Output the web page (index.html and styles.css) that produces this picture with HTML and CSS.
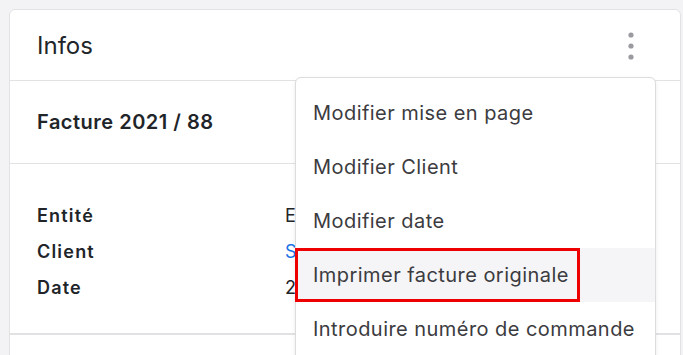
FILE: index.html
```html
<!DOCTYPE html>
<html lang="fr">
<head>
<meta charset="utf-8">
<link rel="stylesheet" href="styles.css">
</head>
<body>
<div class="page">
  <div class="card">
    <div class="card-header">
      <h2 class="title">Infos</h2>
      <button class="kebab" aria-label="Actions">
        <svg width="8" height="30" viewBox="0 0 8 30"><circle cx="4" cy="4" r="2.6"/><circle cx="4" cy="15" r="2.6"/><circle cx="4" cy="26" r="2.6"/></svg>
      </button>
    </div>
    <div class="section invoice">Facture 2021 / 88</div>
    <div class="section details">
      <div class="row"><span class="label">Entité</span><span class="value">Entreprise SA</span></div>
      <div class="row"><span class="label">Client</span><span class="value link">Société Dupont</span></div>
      <div class="row"><span class="label">Date</span><span class="value">2021-06-14</span></div>
    </div>
    <div class="section rest"></div>
  </div>
  <ul class="menu">
    <li class="item">Modifier mise en page</li>
    <li class="item">Modifier Client</li>
    <li class="item">Modifier date</li>
    <li class="item active">Imprimer facture originale</li>
    <li class="item">Introduire numéro de commande</li>
  </ul>
  <div class="highlight"></div>
</div>
</body>
</html>
```

FILE: styles.css
```css
html, body {
  margin: 0;
  padding: 0;
  background: #f3f3f5;
  font-family: Inter, "Noto Sans", sans-serif;
  color: #212529;
}
.page {
  position: relative;
  width: 683px;
  height: 355px;
  overflow: hidden;
  padding: 9px 2px 0 9px;
  box-sizing: border-box;
}
.card {
  background: #fff;
  border: 1px solid #e2e2e4;
  border-radius: 6px;
  height: 400px;
}
.card-header {
  height: 70px;
  border-bottom: 1px solid #e2e2e4;
  display: flex;
  align-items: center;
  justify-content: space-between;
  padding: 0 45px 0 27px;
}
.title {
  margin: 0;
  font-size: 24px;
  font-weight: 400;
  color: #212529;
}
.kebab {
  border: 0;
  background: none;
  padding: 0;
  display: flex;
  margin-top: 1px;
}
.kebab svg { fill: #9a9aa0; }
.section {
  border-bottom: 1px solid #e2e2e4;
  padding-left: 27px;
}
.invoice {
  height: 82px;
  display: flex;
  align-items: center;
  font-size: 20px;
  letter-spacing: 0.5px;
  font-weight: 600;
}
.details {
  height: 170px;
  box-sizing: border-box;
  padding-top: 34px;
}
.row {
  display: flex;
  height: 36px;
  font-size: 18px;
  line-height: 36px;
}
.label {
  width: 248px;
  font-weight: 600;
  letter-spacing: 1.2px;
}
.value { white-space: nowrap; }
.link { color: #1a73e8; }
.menu {
  position: absolute;
  left: 295px;
  top: 77px;
  width: 361px;
  margin: 0;
  padding: 8px 0;
  list-style: none;
  background: #fff;
  border: 1px solid #dcdcdf;
  border-radius: 6px;
  box-shadow: 0 2px 4px rgba(0,0,0,0.08);
  box-sizing: border-box;
}
.item {
  height: 54px;
  line-height: 54px;
  padding-left: 17px;
  font-size: 20px;
  letter-spacing: 0.45px;
  color: #3b3b40;
  white-space: nowrap;
}
.item.active { background: #f5f5f7; }
.highlight {
  position: absolute;
  left: 295px;
  top: 248px;
  width: 285px;
  height: 54px;
  box-sizing: border-box;
  border: 3px solid #ee0000;
}
```
